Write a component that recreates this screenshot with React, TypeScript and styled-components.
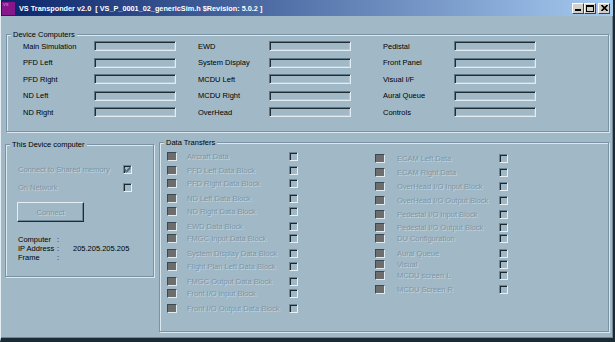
import styled, { createGlobalStyle } from 'styled-components';

const FACE = '#a1b9c7';
const ETCH_DARK = '#7a92a1';
const ETCH_LIGHT = '#dce8ef';
const GREY_TEXT = '#7f95a3';

const GlobalStyle = createGlobalStyle`
  html, body {
    margin: 0;
    padding: 0;
    background: #1b2a33;
  }
  body {
    font-family: "Liberation Sans", Arial, sans-serif;
    font-size: 7.5px;
    color: #000;
  }
`;

const Window = styled.div`
  width: 615px;
  height: 342px;
  box-sizing: border-box;
  background: ${FACE};
  border-left: 1px solid #e4eef4;
  border-right: 2px solid #1b2a33;
  border-bottom: 4px solid #1b2a33;
  box-shadow: inset -1px -1px 0 #6f8794;
  display: flex;
  flex-direction: column;
  overflow: hidden;
`;

const TitleBar = styled.div`
  height: 16px;
  flex: none;
  display: flex;
  align-items: center;
  padding: 0 3px 0 1px;
  background: linear-gradient(to right, #0a246a, #a6caf0);
`;

const AppIcon = styled.div`
  width: 13px;
  height: 13px;
  background: #86168a;
  color: #e59ae6;
  font-size: 4px;
  line-height: 6px;
  padding-left: 1px;
  box-sizing: border-box;
`;

const Title = styled.div`
  flex: 1;
  margin-left: 4px;
  color: #fff;
  font-weight: bold;
  font-size: 7.3px;
  white-space: pre;
`;

const CtrlButton = styled.div<{ $gap?: number }>`
  width: 12px;
  height: 11px;
  box-sizing: border-box;
  margin-left: ${(p) => p.$gap ?? 0}px;
  background: #d4d0c8;
  border: 1px solid;
  border-color: #fff #404040 #404040 #fff;
  display: flex;
  align-items: center;
  justify-content: center;
`;

const Body = styled.div`
  flex: 1;
  display: flex;
  flex-direction: column;
  padding: 14px 0 0 4px;
`;

const Group = styled.fieldset<{ $w: number; $h: number; $top?: number; $left?: number }>`
  margin: ${(p) => p.$top ?? 0}px 0 0 ${(p) => p.$left ?? 0}px;
  padding: 0;
  min-width: 0;
  width: ${(p) => p.$w}px;
  height: ${(p) => p.$h}px;
  box-sizing: border-box;
  border: 1px solid ${ETCH_DARK};
  box-shadow: inset 1px 1px 0 ${ETCH_LIGHT}, 1px 1px 0 ${ETCH_LIGHT};
`;

const Caption = styled.legend`
  margin-left: 4px;
  padding: 0 2px;
  line-height: 9px;
  background: ${FACE};
`;

const DeviceArea = styled.div`
  display: flex;
  padding: 2px 0 0 16px;
`;

const DeviceColumn = styled.div<{ $offset: number }>`
  display: grid;
  grid-template-columns: 71px 82px;
  grid-auto-rows: 10px;
  row-gap: 6.5px;
  align-items: center;
  margin-left: ${(p) => p.$offset}px;
`;

const EditBox = styled.div`
  height: 10px;
  box-sizing: border-box;
  border: 1px solid;
  border-color: #5f7684 #e2edf3 #e2edf3 #5f7684;
  box-shadow: inset 1px 1px 0 #1f2c34, inset -1px -1px 0 #b6cad6;
`;

const BottomRow = styled.div`
  display: flex;
  align-items: flex-start;
  gap: 5px;
  margin-top: 6px;
`;

const ThisArea = styled.div`
  display: flex;
  flex-direction: column;
  padding: 15px 0 0 12px;
`;

const OptionRow = styled.div<{ $top?: number }>`
  display: grid;
  grid-template-columns: 105px 9px;
  height: 10px;
  align-items: center;
  margin-top: ${(p) => p.$top ?? 0}px;
`;

const Disabled = styled.span`
  color: ${GREY_TEXT};
  text-shadow: 1px 1px 0 rgba(226, 237, 243, 0.55);
  white-space: nowrap;
`;

const ConnectButton = styled.div`
  width: 67px;
  height: 20px;
  box-sizing: border-box;
  margin: 10px 0 0 -1px;
  border: 1px solid;
  border-color: #e4eef4 #1f2c34 #1f2c34 #e4eef4;
  box-shadow: inset -1px -1px 0 #6f8794;
  display: flex;
  align-items: center;
  justify-content: center;
`;

const InfoList = styled.div`
  margin-top: 13px;
  display: grid;
  grid-template-columns: 39px 16px auto;
  grid-auto-rows: 9px;
  line-height: 9px;
`;

const DataArea = styled.div`
  display: flex;
  padding-left: 7px;
`;

const DataColumn = styled.div<{ $offset: number }>`
  display: flex;
  flex-direction: column;
  margin-left: ${(p) => p.$offset}px;
`;

const DataRow = styled.div<{ $top: number; $lead: number }>`
  display: grid;
  grid-template-columns: ${(p) => p.$lead}px 102px 9px;
  height: 11px;
  align-items: center;
  margin-top: ${(p) => p.$top}px;
`;

const Led = styled.div`
  width: 10px;
  height: 9px;
  box-sizing: border-box;
  background: #6d6d6d;
  border: 1px solid;
  border-color: #3a4850 #e0ecf2 #e0ecf2 #3a4850;
`;

const CheckBox = styled.div`
  width: 9px;
  height: 9px;
  box-sizing: border-box;
  border: 1px solid;
  border-color: #6f8593 #e8f0f4 #e8f0f4 #6f8593;
  box-shadow: inset 1px 1px 0 #1c2830;
  display: flex;
  align-items: center;
  justify-content: center;
`;

const devices = [
  { offset: 0, items: ['Main Simulation', 'PFD Left', 'PFD Right', 'ND Left', 'ND Right'] },
  { offset: 22, items: ['EWD', 'System Display', 'MCDU Left', 'MCDU Right', 'OverHead'] },
  { offset: 32, items: ['Pedistal', 'Front Panel', 'Visual I/F', 'Aural Queue', 'Controls'] },
];

const ROW_H = 11;
const DATA_BASE = 147;

const leftTransfers: [string, number][] = [
  ['Aircraft Data', 156],
  ['PFD Left Data Block', 170],
  ['PFD Right Data Block', 183],
  ['ND Left Data Block', 198],
  ['ND Right Data Block', 211],
  ['EWD Data Block', 226],
  ['FMGC Input Data  Block', 238],
  ['System Display Data Block', 253],
  ['Flight Plan Left Data Block', 266],
  ['FMGC Output Data Block', 281],
  ['Front I/O Input Block', 293],
  ['Front I/O Output Data Block', 308],
];

const rightTransfers: [string, number][] = [
  ['ECAM Left Data', 158],
  ['ECAM Right Data', 172],
  ['OverHead I/O Input Block', 186],
  ['OverHead I/O Output Block', 200],
  ['Pedestal I/O Input Block', 214],
  ['Pedestal I/O Output Block', 227],
  ['DU Configuration', 238],
  ['Aural Queue', 253],
  ['Visual', 264],
  ['MCDU screen L', 275],
  ['MCDU Screen R', 289],
];

const CheckMark = () => (
  <svg width="7" height="7" viewBox="0 0 7 7">
    <path d="M0.5 2.5 L2.5 4.5 L6.5 0.5 M0.5 3.5 L2.5 5.5 L6.5 1.5 M0.5 4.5 L2.5 6.5 L6.5 2.5" stroke="#5a6e7c" strokeWidth="1" fill="none" />
  </svg>
);

const TransferColumn = ({ rows, offset, lead }: { rows: [string, number][]; offset: number; lead: number }) => {
  let prev = DATA_BASE;
  return (
    <DataColumn $offset={offset}>
      {rows.map(([label, y]) => {
        const top = y - ROW_H / 2 - prev;
        prev = y + ROW_H / 2;
        return (
          <DataRow key={label} $top={top} $lead={lead}>
            <Led />
            <Disabled>{label}</Disabled>
            <CheckBox />
          </DataRow>
        );
      })}
    </DataColumn>
  );
};

const App = () => (
  <>
    <GlobalStyle />
    <Window>
      <TitleBar>
        <AppIcon>VS</AppIcon>
        <Title>VS Transponder v2.0  [ VS_P_0001_02_genericSim.h $Revision: 5.0.2 ]</Title>
        <CtrlButton>
          <svg width="6" height="6" viewBox="0 0 6 6"><rect x="0" y="4" width="6" height="2" fill="#000" /></svg>
        </CtrlButton>
        <CtrlButton>
          <svg width="8" height="7" viewBox="0 0 8 7"><rect x="0.5" y="0.5" width="7" height="6" stroke="#000" fill="none" /><rect x="0" y="0" width="8" height="2" fill="#000" /></svg>
        </CtrlButton>
        <CtrlButton $gap={2}>
          <svg width="7" height="6" viewBox="0 0 7 6"><path d="M0.5 0 L6.5 6 M6.5 0 L0.5 6" stroke="#000" strokeWidth="1.6" /></svg>
        </CtrlButton>
      </TitleBar>
      <Body>
        <Group $w={603} $h={102} $left={1}>
          <Caption>Device Computers</Caption>
          <DeviceArea>
            {devices.map((col) => (
              <DeviceColumn key={col.items[0]} $offset={col.offset}>
                {col.items.flatMap((name) => [
                  <span key={name}>{name}</span>,
                  <EditBox key={`${name}-box`} />,
                ])}
              </DeviceColumn>
            ))}
          </DeviceArea>
        </Group>
        <BottomRow>
          <Group $w={149} $h={137} $top={2}>
            <Caption>This Device computer</Caption>
            <ThisArea>
              <OptionRow>
                <Disabled>Connect to Shared memory</Disabled>
                <CheckBox><CheckMark /></CheckBox>
              </OptionRow>
              <OptionRow $top={8}>
                <Disabled>On Network</Disabled>
                <CheckBox />
              </OptionRow>
              <ConnectButton>
                <Disabled>Connect</Disabled>
              </ConnectButton>
              <InfoList>
                <span>Computer</span><span>:</span><span />
                <span>IP Address</span><span>:</span><span>205.205.205.205</span>
                <span>Frame</span><span>:</span><span />
              </InfoList>
            </ThisArea>
          </Group>
          <Group $w={450} $h={194}>
            <Caption>Data Transfers</Caption>
            <DataArea>
              <TransferColumn rows={leftTransfers} offset={0} lead={20} />
              <TransferColumn rows={rightTransfers} offset={77} lead={22} />
            </DataArea>
          </Group>
        </BottomRow>
      </Body>
    </Window>
  </>
);

export default App;
